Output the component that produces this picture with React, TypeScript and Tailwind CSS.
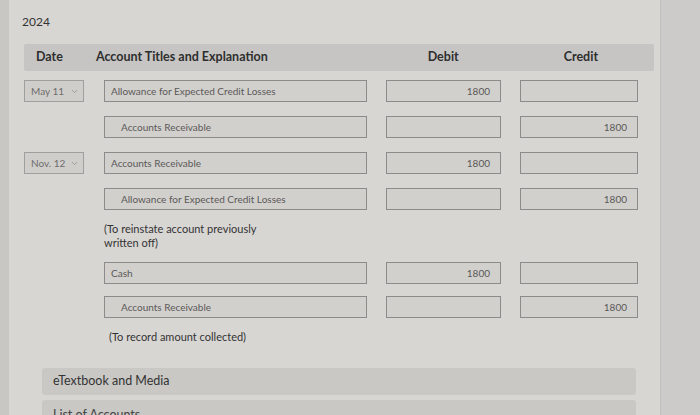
import { ChevronDown } from 'lucide-react';

const font = { fontFamily: 'Lato, "Open Sans", sans-serif' };

type Row = {
  date?: string;
  account: string;
  indent?: boolean;
  debit?: string;
  credit?: string;
};

function Field({ text, right, indent, className = '' }: { text?: string; right?: boolean; indent?: boolean; className?: string }) {
  return (
    <div
      className={`h-[22px] flex items-center border border-[#8c8b89] bg-[#d2d0cd] text-[10px] text-[#5a5958] ${
        right ? 'justify-end pr-[10px]' : indent ? 'pl-[16px]' : 'pl-[6px]'
      } ${className}`}
    >
      {text}
    </div>
  );
}

function EntryRow({ row }: { row: Row }) {
  return (
    <div className="flex items-center">
      <div className="w-[60px]">
        {row.date && (
          <div className="h-[22px] w-full flex items-center justify-between border border-[#a09f9d] bg-[#d0cecb] pl-[6px] pr-[4px] text-[10px] text-[#6e6d6b]">
            <span>{row.date}</span>
            <ChevronDown size={9} strokeWidth={1.5} className="text-[#777]" />
          </div>
        )}
      </div>
      <div className="ml-[20px] w-[263px]">
        <Field text={row.account} indent={row.indent} />
      </div>
      <div className="ml-[19px] w-[115px]">
        <Field text={row.debit} right />
      </div>
      <div className="ml-[19px] w-[118px]">
        <Field text={row.credit} right />
      </div>
    </div>
  );
}

export default function App() {
  return (
    <div className="w-[700px] h-[415px] overflow-hidden flex bg-[#d8d6d3]" style={font}>
      <div className="w-[9px] bg-[#c9c7c4]" />
      <div className="w-[651px] pl-[15px] pt-[13px]">
        <div className="text-[12px] text-[#333] -ml-[2px]">2024</div>

        <div className="mt-[13px] h-[27px] w-[630px] flex items-center rounded-[2px] bg-[#c6c5c3] text-[12.5px] font-bold text-[#2e2e2e]">
          <span className="ml-[12px]">Date</span>
          <span className="ml-[33px]">Account Titles and Explanation</span>
          <span className="ml-[160px]">Debit</span>
          <span className="ml-[105px]">Credit</span>
        </div>

        <div className="mt-[9px] flex flex-col gap-[14px]">
          <EntryRow row={{ date: 'May 11', account: 'Allowance for Expected Credit Losses', debit: '1800' }} />
          <EntryRow row={{ account: 'Accounts Receivable', indent: true, credit: '1800' }} />
          <EntryRow row={{ date: 'Nov. 12', account: 'Accounts Receivable', debit: '1800' }} />
          <EntryRow row={{ account: 'Allowance for Expected Credit Losses', indent: true, credit: '1800' }} />
        </div>

        <div className="mt-[12px] ml-[80px] text-[11px] leading-[14px] text-[#333]">
          (To reinstate account previously
          <br />
          written off)
        </div>

        <div className="mt-[12px] flex flex-col gap-[12px]">
          <EntryRow row={{ account: 'Cash', debit: '1800' }} />
          <EntryRow row={{ account: 'Accounts Receivable', indent: true, credit: '1800' }} />
        </div>

        <div className="mt-[11px] ml-[85px] text-[11px] text-[#333]">(To record amount collected)</div>

        <div className="mt-[22px] ml-[18px] w-[594px] h-[27px] flex items-center rounded-[3px] bg-[#cac8c5] pl-[11px] text-[12.5px] text-[#333]">
          eTextbook and Media
        </div>
        <div className="mt-[5px] ml-[18px] w-[594px] h-[27px] flex items-start rounded-[3px] bg-[#cac8c5] pl-[11px] pt-[6px] text-[12.5px] text-[#444]">
          List of Accounts
        </div>
      </div>
      <div className="flex-1 border-l border-[#c2c0be] bg-[#cdcaca]" />
    </div>
  );
}
